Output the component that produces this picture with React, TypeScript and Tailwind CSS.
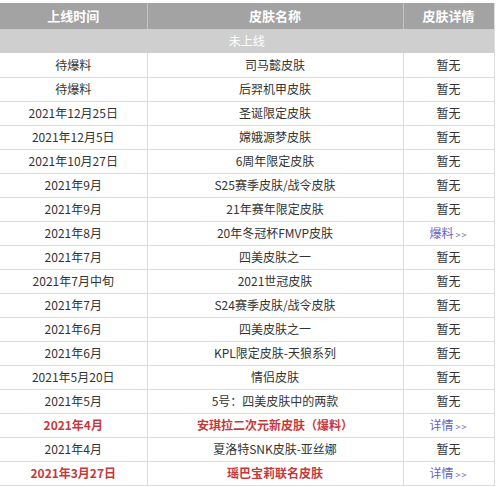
type Row = {
  date: string;
  name: string;
  detail?: "爆料" | "详情";
  hot?: boolean;
};

const ROWS: Row[] = [
  { date: "待爆料", name: "司马懿皮肤" },
  { date: "待爆料", name: "后羿机甲皮肤" },
  { date: "2021年12月25日", name: "圣诞限定皮肤" },
  { date: "2021年12月5日", name: "嫦娥源梦皮肤" },
  { date: "2021年10月27日", name: "6周年限定皮肤" },
  { date: "2021年9月", name: "S25赛季皮肤/战令皮肤" },
  { date: "2021年9月", name: "21年赛年限定皮肤" },
  { date: "2021年8月", name: "20年冬冠杯FMVP皮肤", detail: "爆料" },
  { date: "2021年7月", name: "四美皮肤之一" },
  { date: "2021年7月中旬", name: "2021世冠皮肤" },
  { date: "2021年7月", name: "S24赛季皮肤/战令皮肤" },
  { date: "2021年6月", name: "四美皮肤之一" },
  { date: "2021年6月", name: "KPL限定皮肤-天狼系列" },
  { date: "2021年5月20日", name: "情侣皮肤" },
  { date: "2021年5月", name: "5号：四美皮肤中的两款" },
  { date: "2021年4月", name: "安琪拉二次元新皮肤（爆料）", detail: "详情", hot: true },
  { date: "2021年4月", name: "夏洛特SNK皮肤-亚丝娜" },
  { date: "2021年3月27日", name: "瑶巴宝莉联名皮肤", detail: "详情", hot: true },
];

export default function App() {
  return (
    <div
      className="min-h-screen bg-white pt-[3px] text-[12px] text-[#333]"
      style={{ fontFamily: '"Noto Sans CJK SC", "Noto Sans", sans-serif' }}
    >
      <table className="w-[494px] table-fixed border-collapse">
        <colgroup>
          <col className="w-[147px]" />
          <col className="w-[256px]" />
          <col className="w-[91px]" />
        </colgroup>
        <thead>
          <tr className="h-[26px] bg-[#a3a3a3] text-[13px] font-bold text-white">
            <th className="border-r border-[#c4c4c4] font-bold">上线时间</th>
            <th className="border-r border-[#c4c4c4] font-bold">皮肤名称</th>
            <th className="border-r border-[#dddddd] font-bold">皮肤详情</th>
          </tr>
        </thead>
        <tbody>
          <tr className="h-[24px] bg-[#cfcfcf] text-white">
            <td colSpan={3} className="border-r border-[#dddddd] text-center">
              未上线
            </td>
          </tr>
          {ROWS.map((row, i) => {
            const tone = row.hot ? "font-bold text-[#c8383a]" : "";
            return (
              <tr key={i} className="h-[24px] border-b border-[#dcdcdc]">
                <td className={`border-r border-[#dcdcdc] text-center leading-none ${tone}`}>
                  {row.date}
                </td>
                <td className={`border-r border-[#dcdcdc] text-center leading-none ${tone}`}>
                  {row.name}
                </td>
                <td className="border-r border-[#dcdcdc] text-center leading-none">
                  {row.detail ? (
                    <span className="text-[#6a5fc9]">
                      {row.detail}
                      <span className="ml-[2px] text-[9px] tracking-[1px]">&gt;&gt;</span>
                    </span>
                  ) : (
                    "暂无"
                  )}
                </td>
              </tr>
            );
          })}
        </tbody>
      </table>
    </div>
  );
}
